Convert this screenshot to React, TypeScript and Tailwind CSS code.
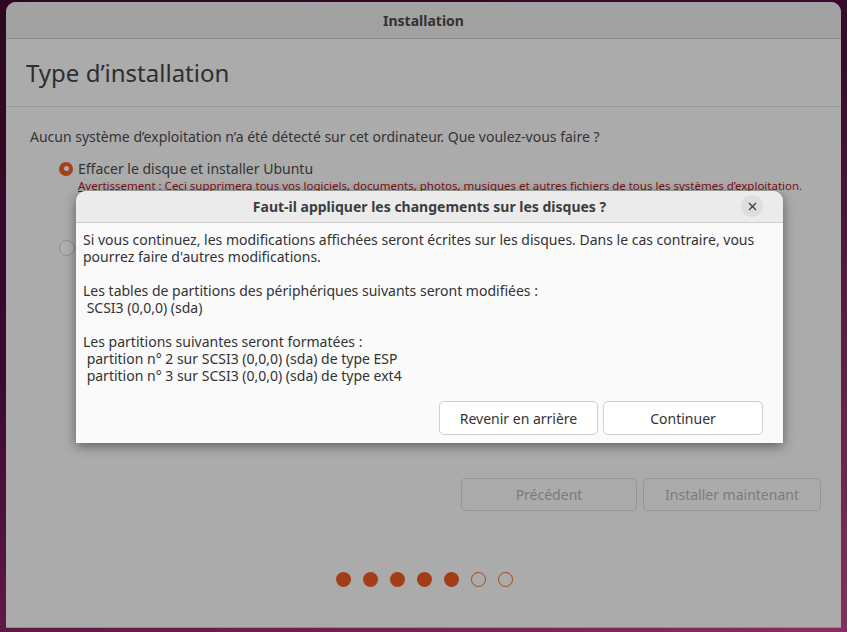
import React from "react";

const font = { fontFamily: '"Noto Sans", "Open Sans", sans-serif' };

const Dots = () => {
  const steps = [true, true, true, true, true, false, false];
  return (
    <div className="flex justify-center gap-[12px] pl-[1px]">
      {steps.map((done, i) => (
        <span
          key={i}
          className={
            done
              ? "h-[15px] w-[15px] rounded-full bg-[#a23d17]"
              : "h-[15px] w-[15px] rounded-full border border-[#a8461f]"
          }
        />
      ))}
    </div>
  );
};

const ConfirmDialog = () => (
  <div className="absolute left-[76px] top-[191px] flex w-[707px] flex-col overflow-hidden rounded-t-[10px] bg-[#fafafa] shadow-[0_3px_12px_rgba(0,0,0,0.45)]">
    <div className="relative flex h-[32px] items-center justify-center border-b border-[#cdcdcd] bg-[#ebebeb]">
      <p className="text-[14px] font-bold text-[#3d3d3d]">
        Faut-il appliquer les changements sur les disques ?
      </p>
      <button className="absolute right-[20px] top-[4px] flex h-[22px] w-[22px] items-center justify-center rounded-full bg-[#dedede] text-[#3d3d3d]">
        <svg width="9" height="9" viewBox="0 0 9 9">
          <path d="M1 1 L8 8 M8 1 L1 8" stroke="currentColor" strokeWidth="1.3" />
        </svg>
      </button>
    </div>
    <div className="whitespace-pre px-[7px] pt-[8px] text-[14px] leading-[17px] text-[#333333]">
      <p>
        Si vous continuez, les modifications affichées seront écrites sur les disques. Dans le cas contraire, vous
      </p>
      <p>pourrez faire d'autres modifications.</p>
      <p>&nbsp;</p>
      <p>Les tables de partitions des périphériques suivants seront modifiées :</p>
      <p> SCSI3 (0,0,0) (sda)</p>
      <p>&nbsp;</p>
      <p>Les partitions suivantes seront formatées :</p>
      <p> partition n° 2 sur SCSI3 (0,0,0) (sda) de type ESP</p>
      <p> partition n° 3 sur SCSI3 (0,0,0) (sda) de type ext4</p>
    </div>
    <div className="flex justify-end gap-[5px] px-[20px] pb-[8px] pt-[17px]">
      <button className="h-[34px] w-[159px] rounded-[5px] border border-[#cfcfcf] bg-white text-[14px] text-[#333333]">
        Revenir en arrière
      </button>
      <button className="h-[34px] w-[160px] rounded-[5px] border border-[#cfcfcf] bg-white text-[14px] text-[#333333]">
        Continuer
      </button>
    </div>
  </div>
);

export default function App() {
  return (
    <div
      className="relative h-[632px] w-[847px] overflow-hidden bg-[linear-gradient(160deg,#2e0822_0%,#3a0a2c_40%,#6a1d4c_75%,#8a2c62_100%)] pb-[4px] pl-[6px] pr-[6px] pt-[2px]"
      style={font}
    >
      <div className="flex h-full flex-col overflow-hidden rounded-t-[10px] border-b border-[#8a8a8a] bg-[#ababab]">
        <div className="flex h-[37px] shrink-0 items-center justify-center border-b border-[#8d8d8d] bg-[#a2a2a2]">
          <p className="text-[14px] font-bold text-[#333333]">Installation</p>
        </div>
        <div className="flex h-[68px] shrink-0 items-center border-b border-[#999999] pl-[20px]">
          <h1 className="text-[24px] text-[#2e2e2e]">Type d’installation</h1>
        </div>
        <div className="flex flex-1 flex-col px-[24px] pt-[19px]">
          <p className="text-[14px] text-[#333333]">
            Aucun système d’exploitation n’a été détecté sur cet ordinateur. Que voulez-vous faire ?
          </p>
          <div className="mt-[11px] flex items-center gap-[5px] pl-[29px]">
            <span className="flex h-[14px] w-[14px] items-center justify-center rounded-full bg-[#a5401a]">
              <span className="h-[5px] w-[5px] rounded-full bg-[#ababab]" />
            </span>
            <p className="text-[14px] text-[#333333]">Effacer le disque et installer Ubuntu</p>
          </div>
          <p className="whitespace-nowrap pl-[48px] text-[11.5px] leading-[14px] text-[#7a1010]">
            <span className="underline">Avertissement</span> : Ceci supprimera tous vos logiciels, documents, photos, musiques et autres fichiers de tous les systèmes d’exploitation.
          </p>
          <div className="mt-[45px] flex h-[20px] items-center pl-[29px]">
            <span className="h-[16px] w-[16px] rounded-full border border-[#8e8e8e] bg-[#b0b0b0]" />
          </div>
          <div className="mt-[220px] flex justify-end gap-[6px]">
            <button className="h-[33px] w-[176px] rounded-[5px] border border-[#959595] text-[14px] text-[#7b7b7b]">
              Précédent
            </button>
            <button className="mr-[-4px] h-[33px] w-[178px] rounded-[5px] border border-[#959595] text-[14px] text-[#7b7b7b]">
              Installer maintenant
            </button>
          </div>
          <div className="mt-[61px]">
            <Dots />
          </div>
        </div>
      </div>
      <ConfirmDialog />
    </div>
  );
}
